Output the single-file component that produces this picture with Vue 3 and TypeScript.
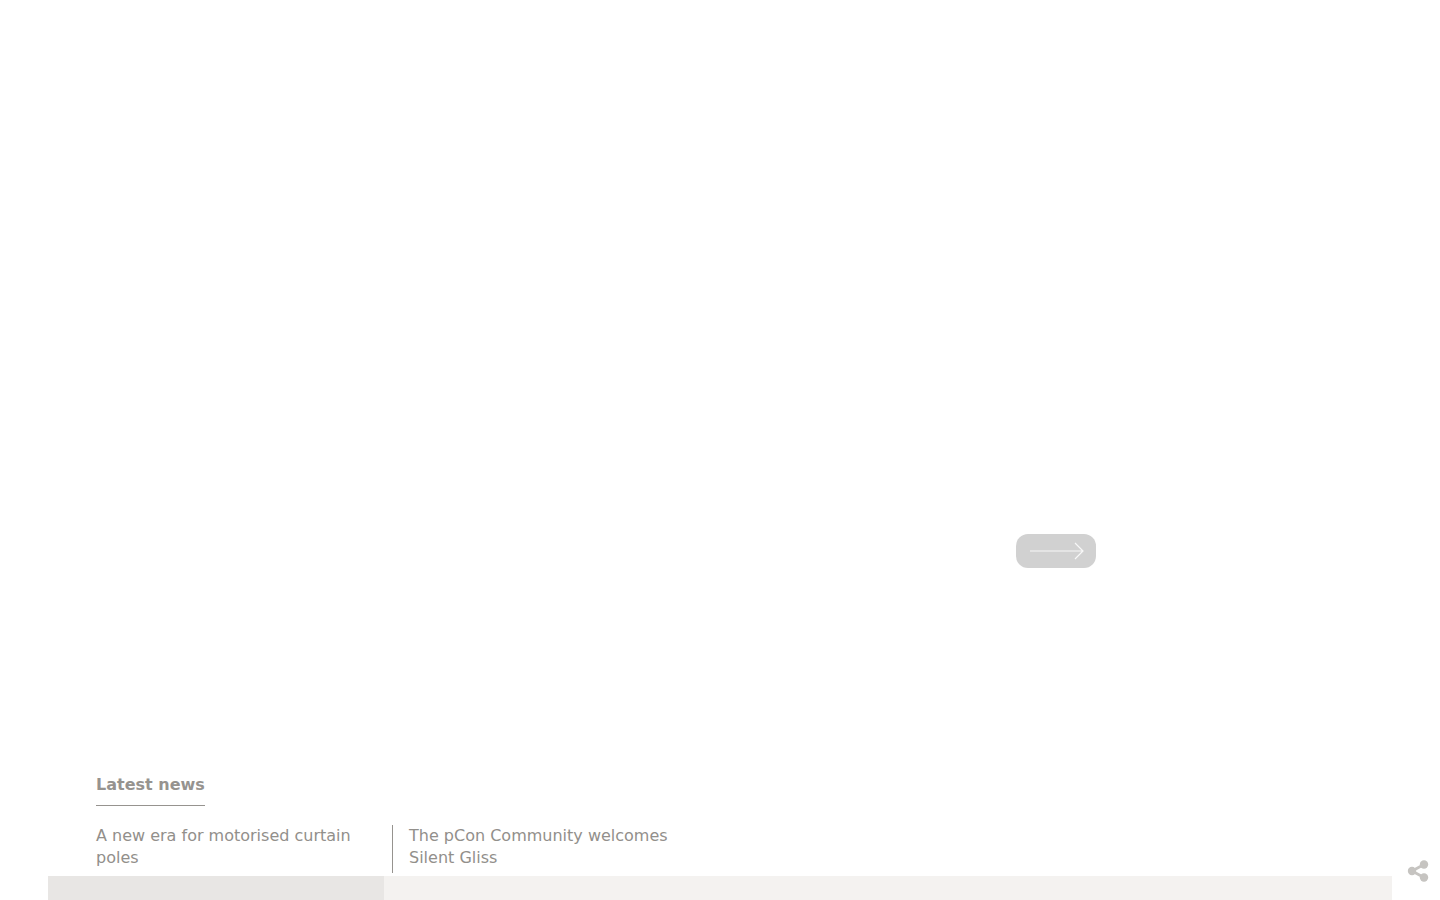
<script setup lang="ts">
const news = [
  'A new era for motorised curtain poles',
  'The pCon Community welcomes Silent Gliss',
]
</script>

<template>
  <div class="page">
    <section class="hero">
      <button class="next-button" type="button" aria-label="Next">
        <svg width="56" height="20" viewBox="0 0 56 20" fill="none">
          <path d="M2 10H55M47 2L55 10L47 18" stroke="#f8f8f8" stroke-width="1.200" />
        </svg>
      </button>
    </section>

    <section class="latest">
      <h2 class="latest-title">Latest news</h2>
      <div class="news-list">
        <a v-for="item in news" :key="item" class="news-item">{{ item }}</a>
      </div>
    </section>

    <div class="strip">
      <div class="strip-active"></div>
    </div>

    <button class="share" type="button" aria-label="Share">
      <svg width="22" height="24" viewBox="0 0 22 24" fill="none">
        <path d="M5 12L17 5.500M5 12L17 18.500" stroke="#c6c4c1" stroke-width="2.800" />
        <circle cx="5" cy="12" r="4.200" fill="#c6c4c1" />
        <circle cx="17" cy="5.500" r="4.200" fill="#c6c4c1" />
        <circle cx="17" cy="18.500" r="4.200" fill="#c6c4c1" />
      </svg>
    </button>
  </div>
</template>

<style>
html,
body {
  margin: 0;
  background: #fff;
}
</style>

<style scoped>
.page {
  height: 900px;
  overflow: hidden;
  font-family: "DejaVu Sans", sans-serif;
  color: #928f8b;
}

.hero {
  box-sizing: border-box;
  height: 774px;
  padding: 534px 0 0 1016px;
}

.next-button {
  display: flex;
  align-items: center;
  justify-content: center;
  width: 80px;
  height: 34px;
  padding: 0;
  border: none;
  border-radius: 12px;
  background: #d1d1d1;
}

.latest {
  padding: 0 48px 0 96px;
}

.latest-title {
  display: inline-block;
  margin: 0;
  padding-bottom: 10px;
  border-bottom: 1px solid #96938f;
  font-size: 16px;
  font-weight: 700;
  line-height: 21px;
  color: #96938f;
}

.news-list {
  display: flex;
  margin-top: 19px;
  height: 48px;
}

.news-item {
  box-sizing: border-box;
  width: 296px;
  padding-right: 16px;
  font-size: 16px;
  line-height: 22px;
}

.news-item + .news-item {
  width: 292px;
  padding: 0 0 0 16px;
  border-left: 1px solid #96938f;
}

.strip {
  display: flex;
  height: 24px;
  margin: 3px 48px 0;
  background: #f4f2f0;
}

.strip-active {
  width: 336px;
  background: #e8e6e4;
}

.share {
  position: fixed;
  right: 11px;
  top: 859px;
  display: flex;
  padding: 0;
  border: none;
  background: none;
}
</style>
